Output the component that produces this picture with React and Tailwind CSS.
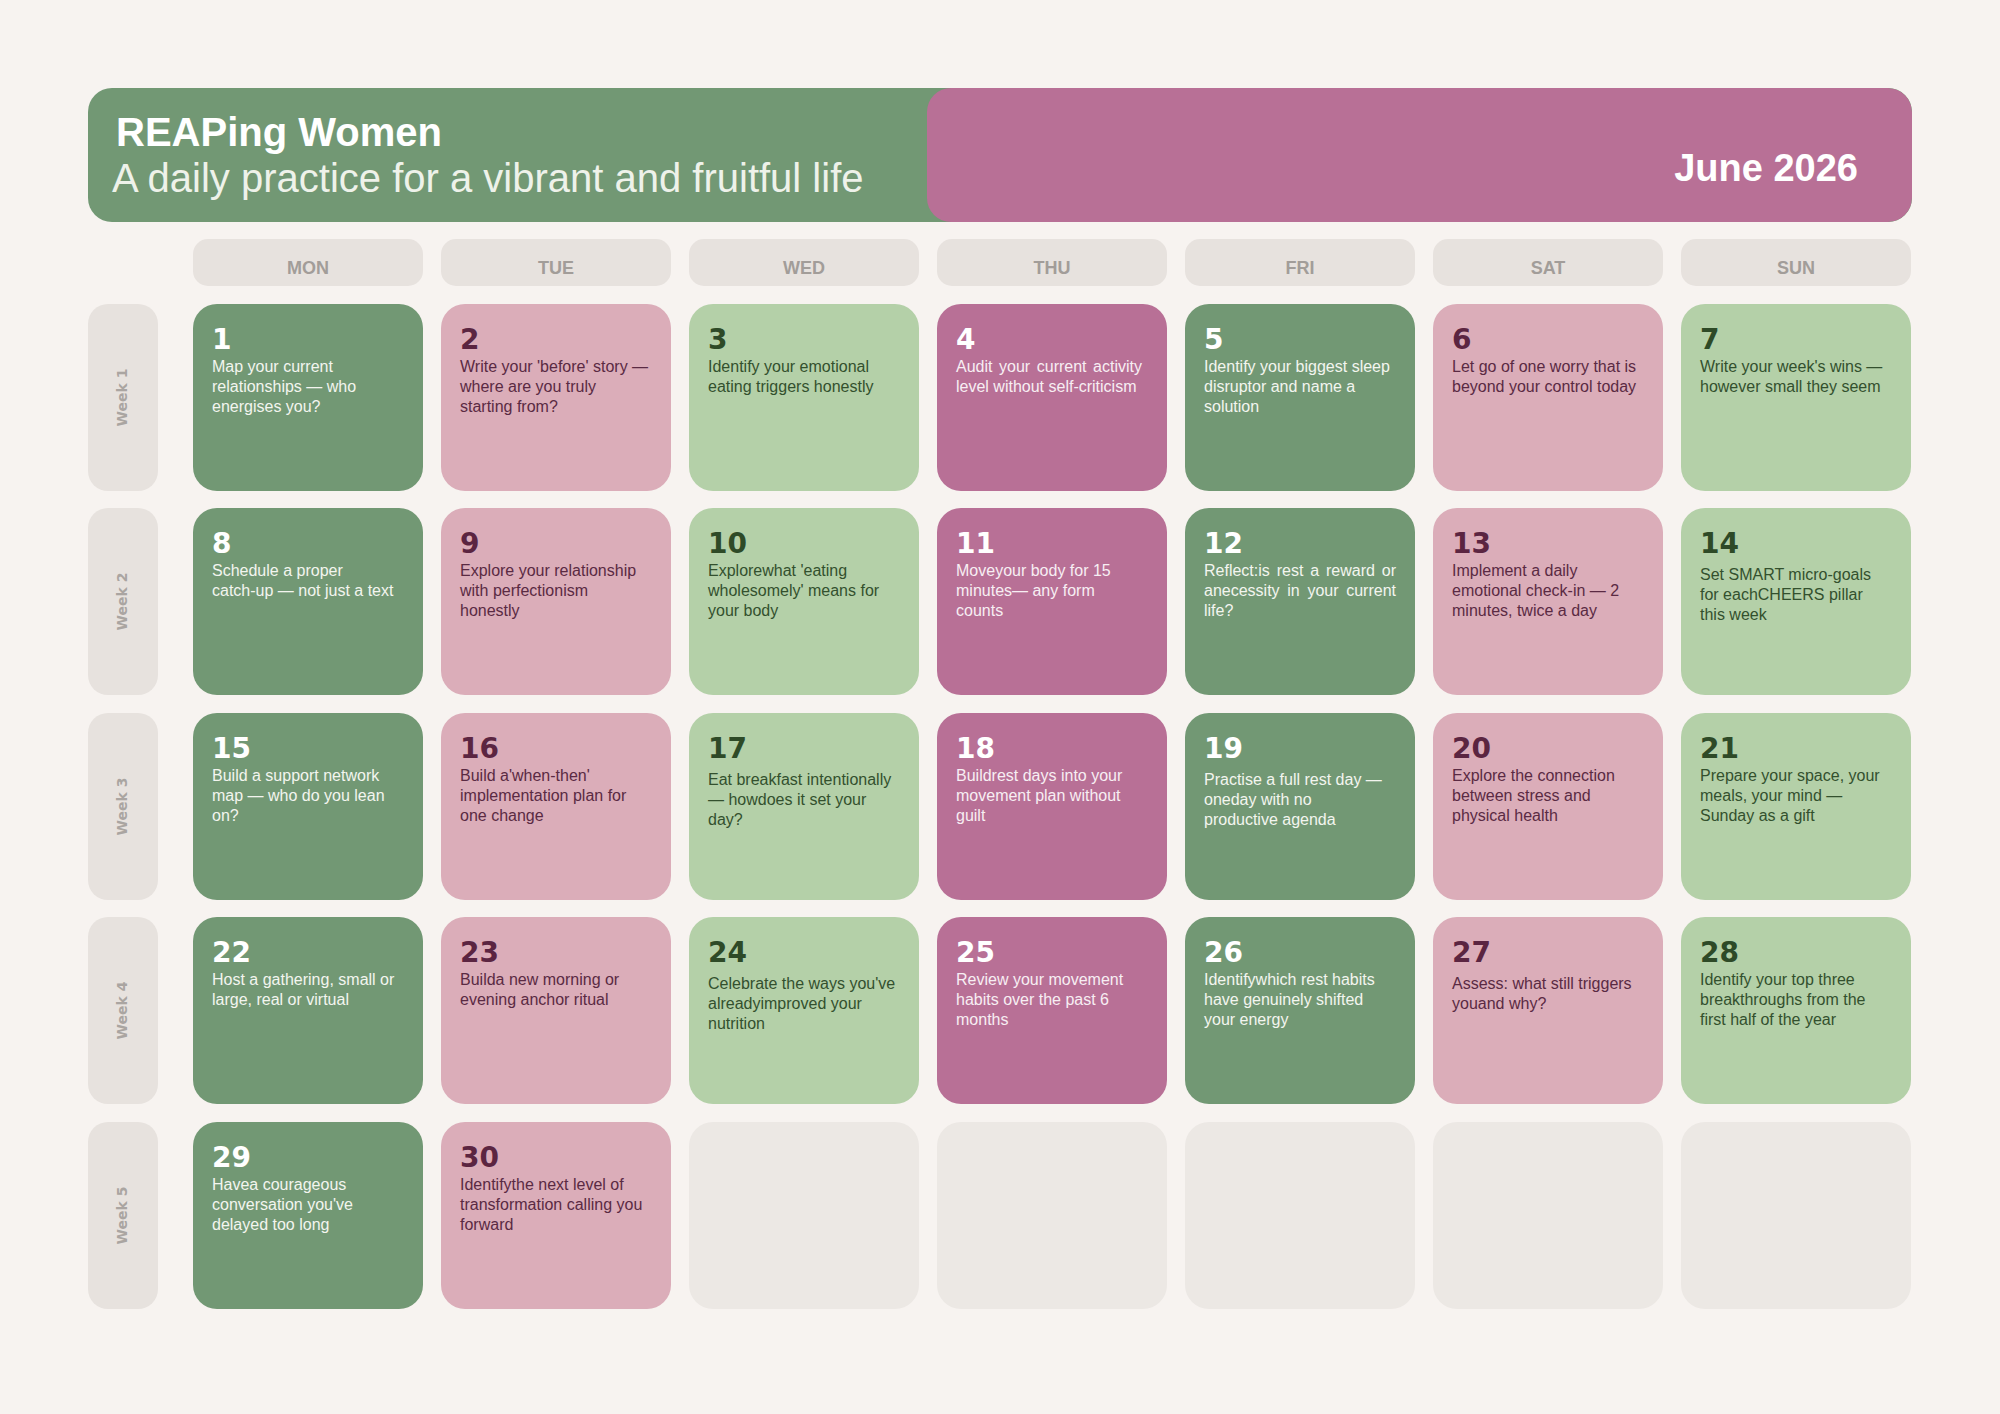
import React from "react";

const STYLES = {
  dg: { card: "bg-[#729874]", num: "text-white", txt: "text-[#f3f5ef]" },
  lp: { card: "bg-[#dbadb9]", num: "text-[#5b2541]", txt: "text-[#5a2a43]" },
  lg: { card: "bg-[#b4d0a8]", num: "text-[#2e4a27]", txt: "text-[#33502e]" },
  dp: { card: "bg-[#b87096]", num: "text-white", txt: "text-[#f7eef3]" },
};
const COLS = ["dg", "lp", "lg", "dp", "dg", "lp", "lg"];
const DAYS = ["MON", "TUE", "WED", "THU", "FRI", "SAT", "SUN"];

const ENTRIES = [
  { lines: ["Map your current", "relationships — who", "energises you?"] },
  { lines: ["Write your 'before' story —", "where are you truly", "starting from?"] },
  { lines: ["Identify your emotional", "eating triggers honestly"] },
  { lines: ["Audit your current activity", "level without self-criticism"], justify: 1, jw: "w-[186px]" },
  { lines: ["Identify your biggest sleep", "disruptor and name a", "solution"] },
  { lines: ["Let go of one worry that is", "beyond your control today"] },
  { lines: ["Write your week's wins —", "however small they seem"] },
  { lines: ["Schedule a proper", "catch-up — not just a text"] },
  { lines: ["Explore your relationship", "with perfectionism", "honestly"] },
  { lines: ["Explorewhat 'eating", "wholesomely' means for", "your body"] },
  { lines: ["Moveyour body for 15", "minutes— any form", "counts"] },
  { lines: ["Reflect:is rest a reward or", "anecessity in your current", "life?"], justify: 2, jw: "w-[192px]" },
  { lines: ["Implement a daily", "emotional check-in — 2", "minutes, twice a day"] },
  { lines: ["Set SMART micro-goals", "for eachCHEERS pillar", "this week"], off: true },
  { lines: ["Build a support network", "map — who do you lean", "on?"] },
  { lines: ["Build a'when-then'", "implementation plan for", "one change"] },
  { lines: ["Eat breakfast intentionally", "— howdoes it set your", "day?"], off: true },
  { lines: ["Buildrest days into your", "movement plan without", "guilt"] },
  { lines: ["Practise a full rest day —", "oneday with no", "productive agenda"], off: true },
  { lines: ["Explore the connection", "between stress and", "physical health"] },
  { lines: ["Prepare your space, your", "meals, your mind —", "Sunday as a gift"] },
  { lines: ["Host a gathering, small or", "large, real or virtual"] },
  { lines: ["Builda new morning or", "evening anchor ritual"] },
  { lines: ["Celebrate the ways you've", "alreadyimproved your", "nutrition"], off: true },
  { lines: ["Review your movement", "habits over the past 6", "months"] },
  { lines: ["Identifywhich rest habits", "have genuinely shifted", "your energy"] },
  { lines: ["Assess: what still triggers", "youand why?"], off: true },
  { lines: ["Identify your top three", "breakthroughs from the", "first half of the year"] },
  { lines: ["Havea courageous", "conversation you've", "delayed too long"] },
  { lines: ["Identifythe next level of", "transformation calling you", "forward"] },
];

function DayCard({ day, entry, col }) {
  const s = STYLES[COLS[col]];
  return (
    <div className={`${s.card} rounded-[24px] pl-[19px] pr-[12px] pt-[22px]`}>
      <div className={`${s.num} font-['DejaVu_Sans',sans-serif] font-bold text-[28px] leading-none`}>{day}</div>
      <div className={`${s.txt} ${entry.off ? "mt-[7px]" : "mt-[3px]"} text-[16px] leading-[20px]`}>
        {entry.lines.map((l, i) =>
          entry.justify && i < entry.justify ? (
            <div key={i} className={`${entry.jw} whitespace-nowrap text-justify [text-align-last:justify]`}>{l}</div>
          ) : (
            <div key={i} className="whitespace-nowrap">{l}</div>
          )
        )}
      </div>
    </div>
  );
}

export default function App() {
  const rows = [0, 1, 2, 3, 4];
  return (
    <div className="min-h-[1414px] bg-[#f7f3f0] px-[88px] pt-[88px] font-['Liberation_Sans',Arial,sans-serif]">
      <div className="flex h-[134px] rounded-[24px] bg-[#729874] overflow-hidden">
        <div className="flex-1 pl-6 pt-6">
          <div className="ml-[4px] text-[40px] leading-none font-bold text-white">REAPing Women</div>
          <div className="mt-[6px] text-[40px] leading-none text-[#eef2ea]">A daily practice for a vibrant and fruitful life</div>
        </div>
        <div className="w-[985px] rounded-[24px] bg-[#b87096] flex items-center justify-end pt-[25px] pr-[54px]">
          <div className="text-[38px] leading-none font-bold text-white">June 2026</div>
        </div>
      </div>

      <div className="mt-[17px] grid grid-cols-[87px_repeat(7,230px)] grid-rows-[47px_repeat(5,187px)] gap-x-[18px] gap-y-[17.5px]">
        <div />
        {DAYS.map((d) => (
          <div key={d} className="rounded-[15px] bg-[#e7e2de] flex items-center justify-center pt-[11px] text-[18px] font-bold text-[#a29d99]">
            {d}
          </div>
        ))}
        {rows.map((r) => (
          <React.Fragment key={r}>
            <div className="w-[70px] rounded-[20px] bg-[#e7e2de] flex items-center justify-center">
              <div className="-rotate-90 whitespace-nowrap font-['DejaVu_Sans',sans-serif] font-bold text-[14px] text-[#aaa5a1]">
                Week {r + 1}
              </div>
            </div>
            {DAYS.map((_, c) => {
              const day = r * 7 + c + 1;
              if (day > 30) {
                return <div key={c} className="rounded-[24px] bg-[#ece8e4]" />;
              }
              return <DayCard key={c} day={day} entry={ENTRIES[day - 1]} col={c} />;
            })}
          </React.Fragment>
        ))}
      </div>
    </div>
  );
}
